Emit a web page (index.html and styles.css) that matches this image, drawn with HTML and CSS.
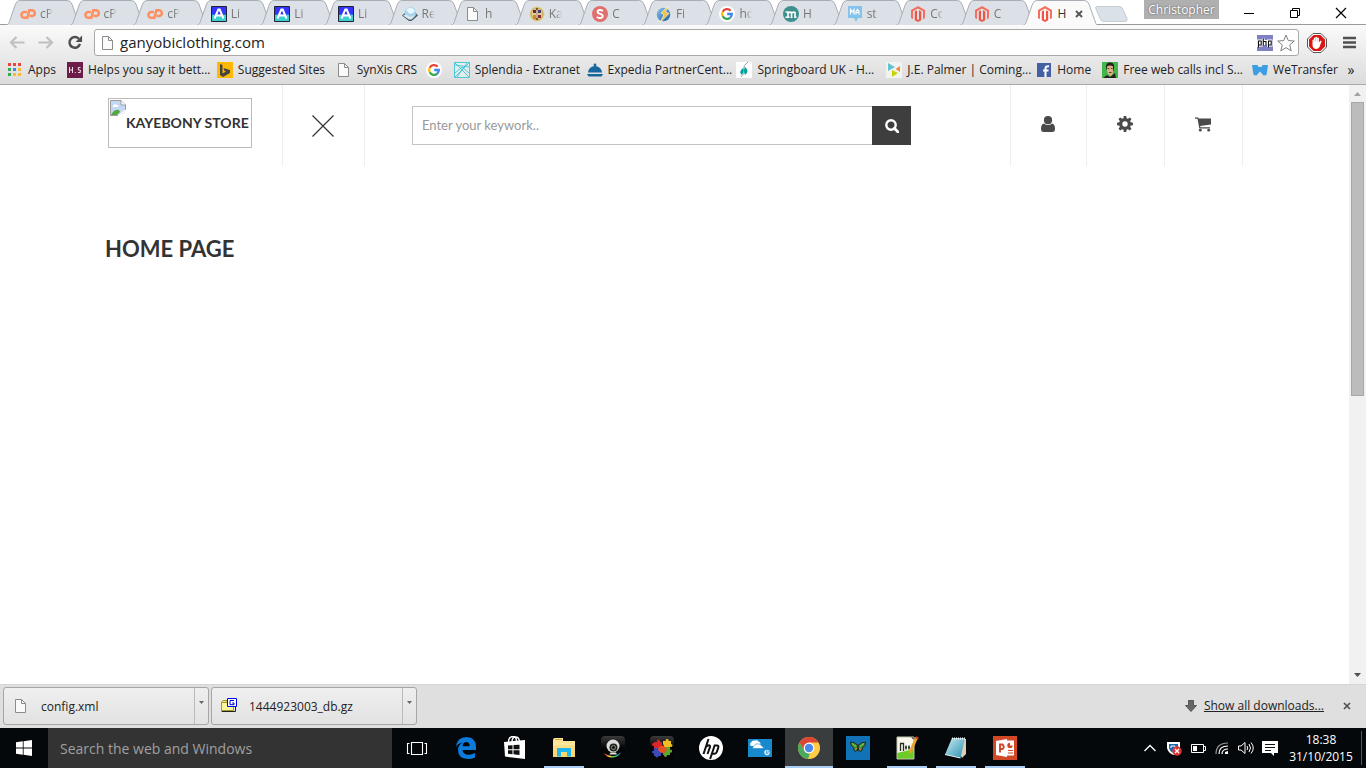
FILE: index.html
```html
<!DOCTYPE html>
<html lang="en">
<head>
<meta charset="utf-8">
<title>Home page</title>
<link rel="stylesheet" href="styles.css">
</head>
<body>
<svg class="defs" aria-hidden="true">
  <defs>
    <linearGradient id="gSky" x1="0" y1="0" x2="0" y2="1"><stop offset=".52" stop-color="#3434ff"/><stop offset=".56" stop-color="#3ccfcf"/></linearGradient>
    <linearGradient id="gOrb" x1="0" y1="0" x2="1" y2="1"><stop offset="0" stop-color="#8cc4ee"/><stop offset="1" stop-color="#1c5f9c"/></linearGradient>
    <linearGradient id="gFolder" x1="0" y1="0" x2="0" y2="1"><stop offset="0" stop-color="#ffe9a0"/><stop offset="1" stop-color="#f8d367"/></linearGradient>
    <linearGradient id="gTile" x1="0" y1="0" x2="0" y2="1"><stop offset="0" stop-color="#3a3a3a"/><stop offset=".5" stop-color="#050505"/></linearGradient>
    <linearGradient id="gNote" x1="0" y1="0" x2="1" y2="1"><stop offset="0" stop-color="#c9eef7"/><stop offset="1" stop-color="#2b8fae"/></linearGradient>
    <linearGradient id="gRain" x1="0" y1="0" x2="1" y2="0"><stop offset="0" stop-color="#f33"/><stop offset=".35" stop-color="#fd3"/><stop offset=".65" stop-color="#3d5"/><stop offset="1" stop-color="#28f"/></linearGradient>
    <symbol id="tab" viewBox="0 0 74 24" preserveAspectRatio="none"><path d="M0 24.5C3 23 3 22 4 19L9 5Q10.500 .5 14 .5H61Q64 .5 65.500 4L71 19Q72 23 74 24.500" vector-effect="non-scaling-stroke"/></symbol>
    <symbol id="cp" viewBox="0 0 16 16"><g fill="none" stroke="#ff8f5e" stroke-width="2.500"><path d="M7 6H4.300a2.900 2.900 0 0 0 0 5.800H6.800"/><path d="M7 13 9.400 4.200H12a2.900 2.900 0 0 1 0 5.800H9.500"/></g></symbol>
    <symbol id="az" viewBox="0 0 16 16"><path d="M.5.5h15v15H.5z" fill="url(#gSky)" stroke="#223"/><path d="M3.500 12.500 7.300 3.500h1.400l3.800 9M5.200 9.500h5.600" fill="none" stroke="#fff" stroke-width="2"/></symbol>
    <symbol id="page" viewBox="0 0 16 16"><path d="M2.500 1.500h6l4 4v9h-10z" fill="#fafafa" stroke="#8c8c8c"/><path d="M8.500 1.500v4h4" fill="none" stroke="#8c8c8c"/></symbol>
    <symbol id="goog" viewBox="0 0 16 16"><circle cx="8" cy="8" r="8" fill="#fff"/><g fill="none" stroke-width="2.300"><path d="M11.600 4.700A4.900 4.900 0 0 0 3.700 5.700" stroke="#ea4335"/><path d="M3.700 5.700a4.900 4.900 0 0 0 0 4.600" stroke="#fbbc05"/><path d="M3.700 10.300a4.900 4.900 0 0 0 7.600 1.300" stroke="#34a853"/><path d="M11.300 11.600A4.900 4.900 0 0 0 12.800 8H8.200" stroke="#4285f4"/></g></symbol>
    <symbol id="mag" viewBox="0 0 16 16"><path d="M8 0l7 4v8l-2 1.200V5.200L8 2.400 3 5.200v8L1 12V4z" fill="#f46f5e"/><path d="M4.800 5.500v8.800L8 16l3.200-1.700V5.500L9 4.300v9l-1 .6-1-.6v-9z" fill="#ee5544"/></symbol>
    <symbol id="php" viewBox="0 0 16 16"><path fill="#7f7fc4" d="M0 0h16v16H0z"/><g fill="none" stroke="#fff" stroke-width="2.800"><path d="M1.500 12V6h2.700v4H2M6.300 10V3.500M6.300 6.500H9V10M11.500 12V6h2.700v4H12"/></g><g fill="none" stroke="#111" stroke-width="1.100"><path d="M1.500 12.500V6h2.700v4H2M6.300 10.500v-7M6.300 6.500H9v4M11.500 12.500V6h2.700v4H12"/></g></symbol>
  </defs>
</svg>

<header class="browser">
  <div class="titlebar">
    <div class="tabs" role="tablist">
      <button class="tab" role="tab"><svg class="shape"><use href="#tab"/></svg><svg class="fav"><use href="#cp"/></svg><span>cP</span></button>
      <button class="tab" role="tab"><svg class="shape"><use href="#tab"/></svg><svg class="fav"><use href="#cp"/></svg><span>cP</span></button>
      <button class="tab" role="tab"><svg class="shape"><use href="#tab"/></svg><svg class="fav"><use href="#cp"/></svg><span>cP</span></button>
      <button class="tab" role="tab"><svg class="shape"><use href="#tab"/></svg><svg class="fav"><use href="#az"/></svg><span>Li</span></button>
      <button class="tab" role="tab"><svg class="shape"><use href="#tab"/></svg><svg class="fav"><use href="#az"/></svg><span>Li</span></button>
      <button class="tab" role="tab"><svg class="shape"><use href="#tab"/></svg><svg class="fav"><use href="#az"/></svg><span>Li</span></button>
      <button class="tab" role="tab"><svg class="shape"><use href="#tab"/></svg><svg class="fav" viewBox="0 0 16 16"><path d="M0 9.500 3 7l10-1 3 3.500L9.500 15H7z" fill="#44606f"/><path d="M2.500 4.500 8 .5l5 2 1 6-6 3.500-5-2z" fill="#a9d5ec"/><path d="M4 4l4-2.500L12 3l.5 3L8 8z" fill="#e9f7fd"/><path d="M1 9.500 4 8.500l4 2.500 6.500-2.500-5 5H7z" fill="#dfe8ee"/></svg><span>Re</span></button>
      <button class="tab" role="tab"><svg class="shape"><use href="#tab"/></svg><svg class="fav"><use href="#page"/></svg><span>h</span></button>
      <button class="tab" role="tab"><svg class="shape"><use href="#tab"/></svg><svg class="fav" viewBox="0 0 16 16"><circle cx="8" cy="8" r="7.500" fill="#e2cf8e"/><circle cx="8" cy="8" r="6" fill="none" stroke="#c3a253"/><path d="M4 4h3v3H4z" fill="#702630"/><path d="M9 4h3v3H9z" fill="#473a75"/><path d="M4 9h3v4H4z" fill="#d5862c"/><path d="M9 9h3v3H9z" fill="#842a30"/><path d="M7 2h2v12H7z" fill="#7c5a34"/><path d="M7.500 4h1v8h-1z" fill="#fff"/></svg><span>Ka</span></button>
      <button class="tab" role="tab"><svg class="shape"><use href="#tab"/></svg><svg class="fav" viewBox="0 0 16 16"><circle cx="8" cy="8" r="8" fill="#e0706e"/><path d="M10.800 5.200C9.700 3.600 5.600 3.500 5.600 5.900S10.700 7.500 10.700 10 6.300 12.600 5 10.700" fill="none" stroke="#fff" stroke-width="2"/></svg><span>C</span></button>
      <button class="tab" role="tab"><svg class="shape"><use href="#tab"/></svg><svg class="fav" viewBox="0 0 16 16"><circle cx="7.500" cy="8.500" r="6.800" fill="url(#gOrb)"/><path d="M12 0 5 7l3 1.500L4.500 16 13 7.500 9.500 6z" fill="#f6bf45" stroke="#fff3c8" stroke-width=".7"/></svg><span>Fi</span></button>
      <button class="tab" role="tab"><svg class="shape"><use href="#tab"/></svg><svg class="fav"><use href="#goog"/></svg><span>ho</span></button>
      <button class="tab" role="tab"><svg class="shape"><use href="#tab"/></svg><svg class="fav" viewBox="0 0 16 16"><circle cx="8" cy="8" r="8" fill="#3f8f8f"/><path d="M2.500 6H5v5M2.500 11.200h4M5 7.500Q6.500 5.500 8.500 6.500v4.700M8.500 7.500q1.500-2 3.500-1v4.700h1.500M7.500 11.200h2" fill="none" stroke="#fff" stroke-width="1.600"/></svg><span>H</span></button>
      <button class="tab" role="tab"><svg class="shape"><use href="#tab"/></svg><svg class="fav" viewBox="0 0 16 16"><path d="M1 0h14v12h-4l-2 4-2-4H1z" fill="#84c3eb"/><path d="M3.500 8.500v-5L5.200 6 7 3.500v5M9 8.500v-3l1.500-2 1.500 2v3M9 6.500h3" fill="none" stroke="#fff" stroke-width="1.200"/></svg><span>st</span></button>
      <button class="tab" role="tab"><svg class="shape"><use href="#tab"/></svg><svg class="fav"><use href="#mag"/></svg><span>Co</span></button>
      <button class="tab" role="tab"><svg class="shape"><use href="#tab"/></svg><svg class="fav"><use href="#mag"/></svg><span>C</span></button>
      <button class="tab active" role="tab" aria-selected="true"><svg class="shape"><use href="#tab"/></svg><svg class="fav"><use href="#mag"/></svg><span>H</span><svg class="close" viewBox="0 0 8 8"><path d="M1 1l6 6M7 1 1 7" stroke="#555" stroke-width="1.900"/></svg></button>
    </div>
    <button class="newtab" aria-label="New tab"><svg viewBox="0 0 34 18"><path d="M3 1.500h22q3 0 4 3l4 9q1 3-2 3H10q-3 0-4-3L2 4Q1 1.500 3 1.500z" fill="#dbe1e8" stroke="#c6ccd4"/></svg></button>
    <button class="profile">Christopher</button>
    <div class="window-buttons">
      <button aria-label="Minimise"><svg viewBox="0 0 12 12"><path d="M1 6.500h10" stroke="#000"/></svg></button>
      <button aria-label="Restore"><svg viewBox="0 0 12 12"><path d="M1.500 3.500h7v7h-7zM3.500 3V1.500h7v7H9" fill="none" stroke="#000"/></svg></button>
      <button aria-label="Close"><svg viewBox="0 0 12 12"><path d="M1 1l10 10M11 1 1 11" stroke="#000" stroke-width="1.200"/></svg></button>
    </div>
  </div>

  <div class="chrome">
    <form class="toolbar">
      <button type="button" aria-label="Back"><svg viewBox="0 0 16 14"><path d="M15.500 7H2M7.500 1.500 2 7l5.500 5.500" fill="none" stroke="#c0c0c0" stroke-width="2.200"/></svg></button>
      <button type="button" aria-label="Forward"><svg viewBox="0 0 16 14"><path d="M.5 7H14M8.500 1.500 14 7l-5.500 5.500" fill="none" stroke="#c0c0c0" stroke-width="2.200"/></svg></button>
      <button type="button" aria-label="Reload"><svg viewBox="0 0 16 16"><path d="M13.300 9.500A5.700 5.700 0 1 1 12 4" fill="none" stroke="#505050" stroke-width="2.600"/><path d="M15.500.5v7h-7z" fill="#505050"/></svg></button>
      <div class="address">
        <svg class="fav"><use href="#page"/></svg>
        <input type="text" aria-label="Address" value="ganyobiclothing.com">
        <svg class="fav"><use href="#php"/></svg>
        <button type="button" aria-label="Bookmark"><svg viewBox="0 0 18 18"><path d="M9 1l2.300 5.600 6 .4-4.600 3.900 1.500 5.900L9 13.600l-5.200 3.200 1.500-5.900L.7 7l6-.4z" fill="#fff" stroke="#808080" stroke-linejoin="round"/></svg></button>
      </div>
      <button type="button" class="block" aria-label="Ad blocker"><svg viewBox="0 0 20 20"><path d="M6 .5h8L19.500 6v8L14 19.500H6L.5 14V6z" fill="#fff" stroke="#555"/><path d="M6.600 2h6.800L18 6.600v6.800L13.400 18H6.600L2 13.400V6.600z" fill="#dc1414"/><path d="M5.500 9.500V7q.8-.8 1.400 0V5q.8-1 1.600 0V4.200q.9-1 1.700 0V5q1-1 1.700 0v4.500l1.300-1.700q1.400-.4 1.300.6L12.500 14q-1 2-3.500 2-3.500-.5-3.500-4z" fill="#fff"/><path d="M6.900 7v2M8.500 5v3.500M10.200 5v3.500" stroke="#e88" stroke-width=".5"/></svg></button>
      <button type="button" class="menu" aria-label="Menu"><svg viewBox="0 0 13 13"><path d="M0 2h13M0 6.500h13M0 11h13" stroke="#505050" stroke-width="2.600"/></svg></button>
    </form>
    <nav class="bookmarks">
      <a href="#"><svg class="fav" viewBox="0 0 16 16"><path fill="#e8453c" d="M1 1h3v3H1zM6 1h3v3H6zM11 1h3v3h-3z"/><path fill="#34a853" d="M1 6h3v3H1zM1 11h3v3H1z"/><path fill="#4285f4" d="M6 6h3v3H6z"/><path fill="#f9bb2d" d="M11 6h3v3h-3zM6 11h3v3H6zM11 11h3v3h-3z"/></svg><span>Apps</span></a>
      <a href="#"><svg class="fav" viewBox="0 0 16 16"><path fill="#6b1c48" d="M0 0h16v16H0z"/><path d="M2.500 5v6M5.500 5v6M2.500 8h3M13.500 5.500h-2.200V8h2v2.500H11M7.800 10.500h1" fill="none" stroke="#f0dce6"/></svg><span>Helps you say it bett...</span></a>
      <a href="#"><svg class="fav" viewBox="0 0 16 16"><path fill="#ffb900" d="M0 0h16v16H0z"/><path fill="#444" d="M3 2l2.500 1v8.500L9 9.500 7.500 9 6.500 6 13 8v3l-7 4-3-2z"/></svg><span>Suggested Sites</span></a>
      <a href="#"><svg class="fav"><use href="#page"/></svg><span>SynXis CRS</span></a>
      <a href="#" aria-label="Google"><svg class="fav"><use href="#goog"/></svg></a>
      <a href="#"><svg class="fav" viewBox="0 0 16 16"><path d="M.5.5h15v15H.5zM1 1l14 14M15 1 1 15M1 3l14 2M3 15 13 1M1 11l7-6 7 6" fill="#e6f5f8" fill-opacity=".5" stroke="#29c0d3" stroke-width=".8"/></svg><span>Splendia - Extranet</span></a>
      <a href="#"><svg class="fav" viewBox="0 0 16 16"><path d="M1 10.500a7 6.500 0 0 1 14 0zM0 12h16l-1.500 2.500h-13z" fill="#17669e"/><circle cx="8" cy="3" r="1.400" fill="#17669e"/></svg><span>Expedia PartnerCent...</span></a>
      <a href="#"><svg class="fav" viewBox="0 0 16 16"><path fill="#fff" d="M0 0h16v16H0z"/><path d="M12 0Q7 3 7.500 8T5 15" fill="none" stroke="#9a9a9a"/><path d="M7 6q-5 4-1 7 2-3 1-7zM9 5q5 4 0 8-2-4 0-8z" fill="#00a39a"/></svg><span>Springboard UK - H...</span></a>
      <a href="#"><svg class="fav" viewBox="0 0 16 16"><path fill="#f3f3f3" d="M0 0h16v16H0z"/><path fill="#62c4d2" d="M2 1l7 4-7 4z"/><path fill="#c4d600" d="M6 8l6 3-6 4z"/><path fill="#f08a3c" d="M14 4v6L9.500 7z"/></svg><span>J.E. Palmer | Coming...</span></a>
      <a href="#"><svg class="fav" viewBox="0 0 16 16"><path fill="#4460a4" d="M1 1h14v14H1z"/><path fill="none" stroke="#fff" stroke-width="2" d="M9.500 15V6.500Q9.500 4 13 4.300M7 8.500h5.500"/></svg><span>Home</span></a>
      <a href="#"><svg class="fav" viewBox="0 0 16 16"><path fill="#43b64a" d="M0 0h16v16H0z"/><path fill="#262320" d="M4 5q0-5 4.500-4.500T12 6l-.5 3H5zM1 16l4-3 3 2 5-4 1 5z"/><path fill="#dfae88" d="M5 4.500q3-2 6 0V9q0 4-2.500 5Q6 13 5 9z"/><path d="M5.500 6.500H7.300M9 6.500h1.600M7 10.500h2.500" stroke="#5c3725"/></svg><span>Free web calls incl S...</span></a>
      <a href="#"><svg class="fav" viewBox="0 0 16 16"><path fill="#3c9fe4" d="M0 3h5.500l1 2h3l1-2H16l-1.500 10-3 .5L8 9.500l-3.500 4-3-.5z"/></svg><span>WeTransfer</span></a>
      <button aria-label="More bookmarks">»</button>
    </nav>
  </div>
</header>

<div class="viewport">
  <main class="page">
    <div class="store-header">
      <a class="logo" href="#"><svg viewBox="0 0 16 16"><path d="M.5.5H11l4.500 4.500V11L9 15.500H.5z" fill="#c4d8f5" stroke="#9a9a9a"/><path d="M11 .5V5h4.500" fill="#fff" stroke="#9a9a9a"/><path d="M1 15q3-6 8-5l1 2-3 3z" fill="#52a83a"/><path d="M3 6q1-3 4-1 2 0 1 2H3z" fill="#fff"/><path d="M8 16l8-6" stroke="#fff" stroke-width="1.500"/></svg><span>KAYEBONY STORE</span></a>
      <button class="cell nav-toggle" aria-label="Close menu"><svg viewBox="0 0 22 22"><path d="M.5.500l21 21M21.500.500l-21 21" stroke="#333" stroke-width="1.200"/></svg></button>
      <form class="search">
        <input type="text" aria-label="Search" placeholder="Enter your keywork..">
        <button type="button" aria-label="Search"><svg viewBox="0 0 14 14"><circle cx="6" cy="6" r="4.700" fill="none" stroke="#fff" stroke-width="2.400"/><path d="M9.300 9.300 13 13" stroke="#fff" stroke-width="2.800" stroke-linecap="round"/></svg></button>
      </form>
      <div class="actions">
        <button class="cell" aria-label="Account"><svg viewBox="0 0 16 16"><circle cx="8" cy="4.200" r="4.100" fill="#4a4a4a"/><path d="M4 7.500Q8 10.500 12 7.500q3 .8 3 5Q15 16 12.500 16h-9Q1 16 1 12.500q0-4.200 3-5z" fill="#4a4a4a"/></svg></button>
        <button class="cell" aria-label="Settings"><svg viewBox="0 0 16 16"><path d="M6.800 0h2.400l.4 2.200 1.300.5 1.900-1.300 1.700 1.700-1.300 1.900.5 1.300 2.300.5v2.400l-2.300.4-.5 1.300 1.300 1.900-1.700 1.700-1.900-1.300-1.300.5L9.200 16H6.800l-.4-2.300-1.300-.5-1.900 1.300-1.700-1.700 1.300-1.900-.5-1.300L0 9.200V6.800l2.300-.5.500-1.300-1.300-1.900 1.700-1.700 1.900 1.300 1.300-.5zM8 5.300a2.700 2.700 0 1 0 0 5.400 2.700 2.700 0 0 0 0-5.400z" fill="#4a4a4a" fill-rule="evenodd"/></svg></button>
        <button class="cell" aria-label="Cart"><svg viewBox="0 0 16 16"><path d="M0 1.500h3.300l.3 1H16v6L5.200 10l.3 1.200H15v1.300H4.300L2.500 2.700H0z" fill="#4a4a4a"/><circle cx="5.300" cy="14.200" r="1.400" fill="#4a4a4a"/><circle cx="13.700" cy="14.200" r="1.400" fill="#4a4a4a"/></svg></button>
      </div>
    </div>
    <h1>HOME PAGE</h1>
  </main>
  <div class="scrollbar" aria-hidden="true">
    <svg viewBox="0 0 17 17"><path d="M5 11h7L8.500 7z" fill="#a3a3a3"/></svg>
    <div class="track"><div class="thumb"></div></div>
    <svg viewBox="0 0 17 17"><path d="M5 6h7l-3.500 4z" fill="#505050"/></svg>
  </div>
</div>

<section class="downloads" aria-label="Downloads">
  <div class="download"><button class="file"><svg class="fav"><use href="#page"/></svg><span>config.xml</span></button><button class="more" aria-label="Options"><svg viewBox="0 0 5 3"><path d="M0 0h5L2.500 3z" fill="#666"/></svg></button></div>
  <div class="download"><button class="file"><svg class="fav" viewBox="0 0 16 16"><path d="M.5 4.500 2 2.500h4v11H.5z" fill="#f3eb80" stroke="#a09a20"/><path d="M.5 4.500h12v8H.5z" fill="#fbf59c" stroke="#a09a20"/><path d="M1 13.500h13.500V9" fill="none" stroke="#222"/><path d="M6.500.5h9v8h-9z" fill="#fff" stroke="#00f"/><path d="M13 2.500H9v4.200h4V5h-1.800" fill="none" stroke="#00d"/></svg><span>1444923003_db.gz</span></button><button class="more" aria-label="Options"><svg viewBox="0 0 5 3"><path d="M0 0h5L2.500 3z" fill="#666"/></svg></button></div>
  <a class="show-all" href="#"><svg viewBox="0 0 12 12"><path d="M3.500.500h5v5h3L6 11.500.500 5.500h3z" fill="#666" stroke="#555"/></svg><span>Show all downloads...</span></a>
  <button class="dismiss" aria-label="Close downloads"><svg viewBox="0 0 8 8"><path d="M1 1l6 6M7 1 1 7" stroke="#505050" stroke-width="1.700"/></svg></button>
</section>

<footer class="taskbar">
  <button class="start" aria-label="Start"><svg viewBox="0 0 16 16"><path d="M0 2.300 6.800 1.300v6.300H0zM7.600 1.200 16 0v7.600H7.600zM0 8.400h6.800v6.300L0 13.700zM7.600 8.400H16V16l-8.400-1.200z" fill="#fff"/></svg></button>
  <input class="win-search" type="text" aria-label="Search" placeholder="Search the web and Windows">
  <div class="apps">
    <button aria-label="Task view"><svg viewBox="0 0 24 24"><path d="M6.500 6.500h11v12h-11zM4.500 7.500h-2v10h2M19.500 7.500h2v10h-2" fill="none" stroke="#fff" stroke-width="1.100"/></svg></button>
    <button aria-label="Edge"><svg viewBox="0 0 24 24"><path d="M2 11Q3 1 12.500 1 22 1.500 22 11v3H8.500q.5 5 6.500 4.800 3 0 6-1.800v4.500q-3 1.500-7 1.500Q4 22.500 4 14q0-5 4.500-7.500-5 1-6.500 4.500zM8.600 10.200h7.200Q15.500 6 12.300 6T8.600 10.200z" fill="#0b7bdc" fill-rule="evenodd"/></svg></button>
    <button aria-label="Store"><svg viewBox="0 0 24 24"><path d="M1 6l21-2v19L2 20.500z" fill="#fff"/><path d="M5.500 6q0-5 4-5.500t4 5M9 6q0-5 3.500-5t4 4.500" fill="none" stroke="#fff" stroke-width="1.400"/><path d="M5 9.500l4.500-.3v4H5zM10.500 9.100l6-.4v4.500h-6zM5 14.200h4.500v4L5 17.700zM10.500 14.200h6v4.800l-6-.7z" fill="#111"/></svg></button>
    <button class="open" aria-label="File Explorer"><svg viewBox="0 0 24 24"><path d="M1 4q0-2 2-2h8v3h12v16H1z" fill="url(#gFolder)"/><path d="M3 3.500h7" stroke="#e5a92c"/><path d="M1 8h22" stroke="#fff2bd" stroke-width=".7"/><path d="M5 12h14v8.500h-4v-4.500H9v4.500H5z" fill="#21b6ef"/></svg></button>
    <button aria-label="Webcam"><svg viewBox="0 0 24 24"><rect width="24" height="24" rx="4" fill="url(#gTile)"/><path d="M3 17q9 7 17-1-2 5-8 5.500T3 17z" fill="url(#gRain)"/><circle cx="12" cy="10" r="6.500" fill="#dcdcdc"/><circle cx="12.500" cy="11.500" r="4" fill="#222"/><circle cx="12.500" cy="11.500" r="2" fill="#111" stroke="#7e9a6e"/><path d="M9.500 16.500h5.500l1 2H8.500z" fill="#ddd"/></svg></button>
    <button aria-label="Puzzle"><svg viewBox="0 0 24 24"><rect width="24" height="24" rx="4" fill="url(#gTile)"/><path d="M4 6h3q-.5-2.500 1.500-2.500T10 6h2v3q2.500 0 2 2t-3 1H4v-2q-2 .5-2-1.500T4 7z" fill="#d8262b"/><path d="M13 5h2.500q0-2.500 2-2t1 2H21v3q1.500 0 1.500 1.500T20 11h-6V9q-1.500 0-1-2z" fill="#f1bf22"/><path d="M13 11h7v2.500q2.500 0 2 2t-2 1V19h-3q0 2-1.500 2T14 19h-1z" fill="#5aa92f"/><path d="M4 12h7v2q2 0 2 2t-2 1.500V20H8.500q0 1.500-1.500 1.500T5.500 20H4v-2.500q-2 0-2-1.500t2-1.500z" fill="#3d49b9"/><path d="M9 11q3-2 6 0t1 5q-3 2-6 0t-1-5z" fill="#e55323"/></svg></button>
    <button aria-label="HP"><svg viewBox="0 0 24 24"><circle cx="12" cy="12" r="12" fill="#fff"/><path d="M9.500 3 4.500 18M7.500 10.500q4-2.500 3.500.500L8.500 18M15.800 9l-4.700 14M15 9.500h3q2 0 1.200 2.300l-1.300 4q-.6 2-2.400 2H13.500" fill="none" stroke="#111" stroke-width="2"/></svg></button>
    <button aria-label="HP Cloud"><svg viewBox="0 0 24 24"><path fill="#1789cc" d="M0 3h24v18H0z"/><path d="M3 10q-2-2 0-3.500 1-2.500 4-2 2-1 3.500 1 3.500 1 1 4.500z" fill="#fff"/><path d="M5 12.500q-1-2 1.500-3 1-2.500 4-1.500 2.500-.5 3 2 3 .5 1.500 2.500z" fill="#fff" stroke="#1789cc" stroke-width=".6"/><circle cx="19" cy="16.500" r="2.700" fill="#e7f4fc"/><path d="M18 18l1-4M19.500 18l1-3" stroke="#1789cc" stroke-width=".8"/></svg></button>
    <button class="open current" aria-label="Chrome"><svg viewBox="0 0 24 24"><circle cx="12" cy="12" r="11" fill="#fc4"/><path d="M2.500 6.500A11 11 0 0 1 21.500 6.500H12L7.300 14.700z" fill="#db4437"/><path d="M2.500 6.500 7.300 14.700Q9 18 13 17l-2 6A11 11 0 0 1 2.500 6.500z" fill="#4aa960"/><circle cx="12" cy="12" r="5.400" fill="#fff"/><circle cx="12" cy="12" r="4.200" fill="#4d88ee"/></svg></button>
    <button aria-label="Butterfly"><svg viewBox="0 0 24 24"><path fill="#1172b7" d="M0 0h24v24H0z"/><path d="M12 9.500Q8 5.500 4.500 6q0 4.500 3 5.500-.5 3.500 2.500 4l2-2.500 2 2.500q3-.5 2.500-4 3-1 3-5.500-3.500-.5-7.500 3.500z" fill="#4a8e38" stroke="#1f2a22"/><path d="M12 9v6" stroke="#222" stroke-width="1.500"/><path d="M6 7.500l4 3M18 7.500l-4 3" stroke="#7fd04a"/><path d="M9 14l2-2M15 14l-2-2" stroke="#d9713c"/></svg></button>
    <button class="open" aria-label="Notepad++"><svg viewBox="0 0 24 24"><path fill="#f7f7ee" d="M2 1h14l3 3v19H2z"/><path d="M2 17l17-4v10H2z" fill="#6ccb26"/><path d="M2 1h17v22H2z" fill="none" stroke="#bcc6a8"/><path d="M5.500 15V7.500h3V15M11 9.500v4M10 11.500h2M14 9.500v4M13 11.500h2" fill="none" stroke="#263022" stroke-width="1.300"/><path d="M21.500 1.500 15 17" stroke="#e8a32b" stroke-width="3"/><path d="M22.500 1 21.500 3" stroke="#d23b32" stroke-width="3"/></svg></button>
    <button class="open" aria-label="Notepad"><svg viewBox="0 0 24 24"><path d="M8 2l14 1v15l-4 4z" fill="#d9d0b5"/><path d="M8 2h13l-4.500 20L1 18.500z" fill="url(#gNote)"/><path d="M8 2.500h13" stroke="#e9f3f5" stroke-width="2" stroke-dasharray="1 1"/><path d="M1 18.500 16.500 22" stroke="#e8f4f7"/></svg></button>
    <button class="open" aria-label="PowerPoint"><svg viewBox="0 0 24 24"><path fill="#d24726" d="M0 0h24v24H0z"/><path d="M13 4.500h8v15h-8z" fill="#fff"/><path d="M3 5l11-2v18L3 19z" fill="#fff"/><path d="M7 16.500V8.500h2.500q2.500 2.500 0 4.500H7" fill="none" stroke="#d24726" stroke-width="1.900"/><path d="M15 14.500h5M15 17h5" stroke="#d24726"/><circle cx="17" cy="9.500" r="2.700" fill="#d24726"/><path d="M17 9.500V6.500h3.500v3z" fill="#fff"/></svg></button>
  </div>
  <div class="tray">
    <button aria-label="Show hidden icons"><svg viewBox="0 0 16 16"><path d="M2.500 11 8 5.500l5.500 5.500" fill="none" stroke="#fff" stroke-width="1.300"/></svg></button>
    <button aria-label="Security"><svg viewBox="0 0 16 16"><path d="M1 2h13v6q-1 5-6.500 7Q2 13 1 8z" fill="#fff"/><path d="M3 4h9v4q-1 4-4.500 5Q4 12 3 8z" fill="#1c68ad"/><path d="M5 8V6h4v2" fill="none" stroke="#fff"/><circle cx="11" cy="11" r="4.700" fill="#df3434"/><path d="M9 9l4 4M13 9l-4 4" stroke="#fff" stroke-width="1.300"/></svg></button>
    <button aria-label="Battery"><svg viewBox="0 0 16 16"><path d="M1.500 4.500h12v8h-12zM14 6.500h1.500v4H14" fill="none" stroke="#fff"/><path fill="#fff" d="M3 6h4v5H3z"/></svg></button>
    <button aria-label="Wireless"><svg viewBox="0 0 16 16"><g fill="none" stroke="#fff" stroke-width="1.200"><path d="M2 14Q2 3 14 3" stroke="#999"/><path d="M5 14Q5 6 14 6M8 14q0-5 6-5"/></g><path d="M11 14v-2l3-1v3z" fill="#fff"/></svg></button>
    <button aria-label="Volume"><svg viewBox="0 0 16 16"><path d="M.5 6v4h2.500l4 3.500v-11L3 6zM9 6q1.500 2 0 4M11 4q3 4 0 8M13 2.500q4.500 5.500 0 11" fill="none" stroke="#fff"/></svg></button>
    <button aria-label="Notifications"><svg viewBox="0 0 16 16"><path d="M0 1h16v12h-4v3l-3-3H0z" fill="#fff"/><path d="M3 4.500h10M3 7.500h10M3 10.500h6" stroke="#111"/></svg></button>
    <time datetime="2015-10-31T18:38">18:38<br>31/10/2015</time>
  </div>
</footer>
</body>
</html>
```
FILE: styles.css
```css
* { box-sizing: border-box; }
body {
  margin: 0;
  min-height: 100vh;
  display: flex;
  flex-direction: column;
  overflow: hidden;
  background: #fff;
  color: #222;
  font: 12px/16px "Open Sans", "Noto Sans", sans-serif;
}
button, input {
  font: inherit;
  color: inherit;
  border: 0;
  padding: 0;
  margin: 0;
  background: none;
  border-radius: 0;
}
a { color: inherit; text-decoration: none; }
svg { display: block; flex: none; }
.defs { position: absolute; width: 0; height: 0; }
.fav { width: 16px; height: 16px; }

/* Window title bar */
.titlebar {
  display: flex;
  height: 24px;
  padding-left: 6px;
}
.tabs {
  flex: 1;
  display: grid;
  grid-template-columns: repeat(17, 1fr);
}
.tab {
  position: relative;
  display: flex;
  align-items: center;
  gap: 4px;
  min-width: 0;
  padding: 3px 0 0 14px;
  color: #777;
}
.tab .shape {
  position: absolute;
  left: 0;
  top: 0;
  width: calc(100% + 11px);
  height: 25px;
  fill: #dce1e8;
  stroke: #a9adb3;
}
.tab .fav, .tab span, .tab .close { position: relative; }
.tab span {
  width: 15px;
  overflow: hidden;
  text-align: left;
  white-space: nowrap;
  mask-image: linear-gradient(to right, #000 7px, transparent 13px);
}
.tab.active { color: #333; z-index: 1; }
.tab.active .shape { fill: #fafafa; }
.tab.active span { width: 10px; mask-image: none; }
.tab .close { width: 8px; height: 8px; margin-left: 4px; }
.newtab { width: 34px; padding-top: 4px; margin-left: 7px; }
.newtab svg { width: 34px; height: 18px; }
.profile {
  width: 75px;
  height: 19px;
  margin: 0 7px 0 16px;
  background: #b0b0b0;
  color: #fff;
  text-shadow: 0 0 2px #444;
}
.window-buttons { display: flex; margin-right: 2px; }
.window-buttons button {
  width: 46px;
  display: grid;
  place-items: center;
  padding-top: 2px;
}
.window-buttons svg { width: 12px; height: 12px; }

/* Toolbar and bookmarks */
.chrome {
  border-top: 1px solid #9b9b9b;
  border-bottom: 1px solid #a9a9a9;
  background: linear-gradient(#fafafa, #dcdcdc);
  padding-top: 4px;
}
.toolbar {
  display: flex;
  align-items: center;
  padding-left: 9px;
}
.toolbar > button {
  width: 29px;
  display: flex;
}
.toolbar > button svg { width: 16px; height: 15px; }
.address {
  flex: 1;
  height: 27px;
  display: flex;
  align-items: center;
  gap: 4px;
  padding: 0 3px 0 5px;
  margin-left: -2px;
  background: #fff;
  border: 1px solid #a9a9a9;
  border-radius: 3px;
}
.address input {
  flex: 1;
  min-width: 0;
  height: 23px;
  padding-bottom: 2px;
  font-size: 15px;
  line-height: 21px;
  color: #222;
}
.address button svg { width: 18px; height: 18px; }
.toolbar .block { width: 20px; margin: 0 16px 0 8px; }
.toolbar .block svg { width: 20px; height: 20px; }
.toolbar .menu { width: 23px; }
.toolbar .menu svg { width: 13px; height: 13px; }
.bookmarks {
  display: grid;
  grid-template-columns: 60fr 150fr 119fr 90fr 28fr 133fr 150fr 150fr 150fr 66fr 150fr 88fr 26fr;
  align-items: center;
  height: 28px;
  padding-left: 7px;
}
.bookmarks a {
  display: flex;
  align-items: center;
  gap: 5px;
  min-width: 0;
  white-space: nowrap;
}
.bookmarks button { font-size: 14px; padding-right: 4px; }

/* Web page */
.viewport { flex: 1; display: flex; }
.page { flex: 1; padding: 0 106px 0 105px; }
.store-header {
  display: flex;
  align-items: flex-start;
  height: 81px;
}
.cell {
  width: 78px;
  height: 81px;
  display: grid;
  place-items: center;
  border-right: 1px solid #eee;
}
.logo {
  display: flex;
  width: 144px;
  height: 50px;
  margin: 13px 30px 0 3px;
  padding: 1px;
  border: 1px solid #bbb;
  color: #333;
  font: 700 14px/46px Lato, sans-serif;
  white-space: nowrap;
}
.logo svg { width: 16px; height: 16px; }
.nav-toggle { width: 83px; padding-right: 2px; border-left: 1px solid #eee; }
.nav-toggle svg { width: 22px; height: 22px; }
.search {
  flex: 0 1 499px;
  display: flex;
  height: 39px;
  margin: 21px auto 0 47px;
}
.search input {
  flex: 1;
  min-width: 0;
  padding: 0 9px 2px;
  border: 1px solid #c4c4c4;
  border-right: 0;
  font: 13px/18px Lato, sans-serif;
}
.search input::placeholder { color: #999; }
.search button {
  width: 39px;
  display: grid;
  place-items: center;
  background: #3e3e3e;
}
.search svg { width: 14px; height: 14px; }
.actions { display: flex; border-left: 1px solid #eee; }
.actions .cell { padding: 0 2px 4px 0; }
.actions .cell:first-child { width: 76px; }
.actions svg { width: 16px; height: 16px; }
h1 {
  margin: 68px 0 0;
  color: #333;
  font: 700 22px/30px Lato, sans-serif;
}
.scrollbar {
  width: 17px;
  display: flex;
  flex-direction: column;
  background: #f1f1f1;
}
.scrollbar svg { width: 17px; height: 17px; }
.track { flex: 1; }
.thumb {
  height: 52%;
  margin: 0 2px;
  background: #bcbcbc;
  border: 1px solid #a8a8a8;
}

/* Downloads shelf */
.downloads {
  display: flex;
  align-items: center;
  gap: 2px;
  height: 44px;
  padding: 0 15px 2px 3px;
  background: #dfdfdf;
  border-top: 1px solid #d5d5d5;
}
.download {
  display: flex;
  width: 206px;
  height: 38px;
  border: 1px solid #a6a6a6;
  border-radius: 3px;
  background: linear-gradient(#efefef, #e2e2e2);
}
.file {
  flex: 1;
  display: flex;
  align-items: center;
  gap: 12px;
  padding-left: 9px;
}
.file span { padding-top: 2px; }
.more {
  width: 14px;
  display: grid;
  justify-items: center;
  padding-top: 13px;
  align-content: start;
  border-left: 1px solid #bbb;
}
.more svg { width: 5px; height: 3px; }
.show-all {
  display: flex;
  align-items: center;
  gap: 7px;
  margin-left: auto;
  text-decoration: underline;
}
.show-all svg { width: 12px; height: 12px; }
.dismiss { margin-left: 17px; }
.dismiss svg { width: 8px; height: 8px; }

/* Windows taskbar */
.taskbar {
  display: flex;
  height: 40px;
  background: #05080a;
  color: #fff;
}
.start { width: 48px; display: grid; place-items: center; }
.start svg { width: 16px; height: 16px; }
.win-search {
  width: 344px;
  padding: 1px 12px 0;
  background: #333;
  font-size: 14px;
}
.win-search::placeholder { color: #a0a0a0; }
.apps { display: flex; gap: 1px; padding-left: 1px; }
.apps button {
  width: 48px;
  display: grid;
  place-items: center;
}
.apps svg { width: 24px; height: 24px; }
.apps .open {
  background: linear-gradient(#a9cdf5, #a9cdf5) center bottom / 40px 2px no-repeat;
}
.apps .current {
  background: linear-gradient(#a9cdf5, #a9cdf5) center bottom / 48px 2px no-repeat #3a3d3e;
}
.tray {
  display: flex;
  align-items: center;
  margin-left: auto;
  padding-right: 4px;
}
.tray button { width: 24px; display: grid; place-items: center; }
.tray svg { width: 16px; height: 16px; }
.tray time {
  width: 80px;
  padding-right: 1px;
  text-align: center;
  line-height: 17px;
  border-right: 1px solid #555;
}
```
